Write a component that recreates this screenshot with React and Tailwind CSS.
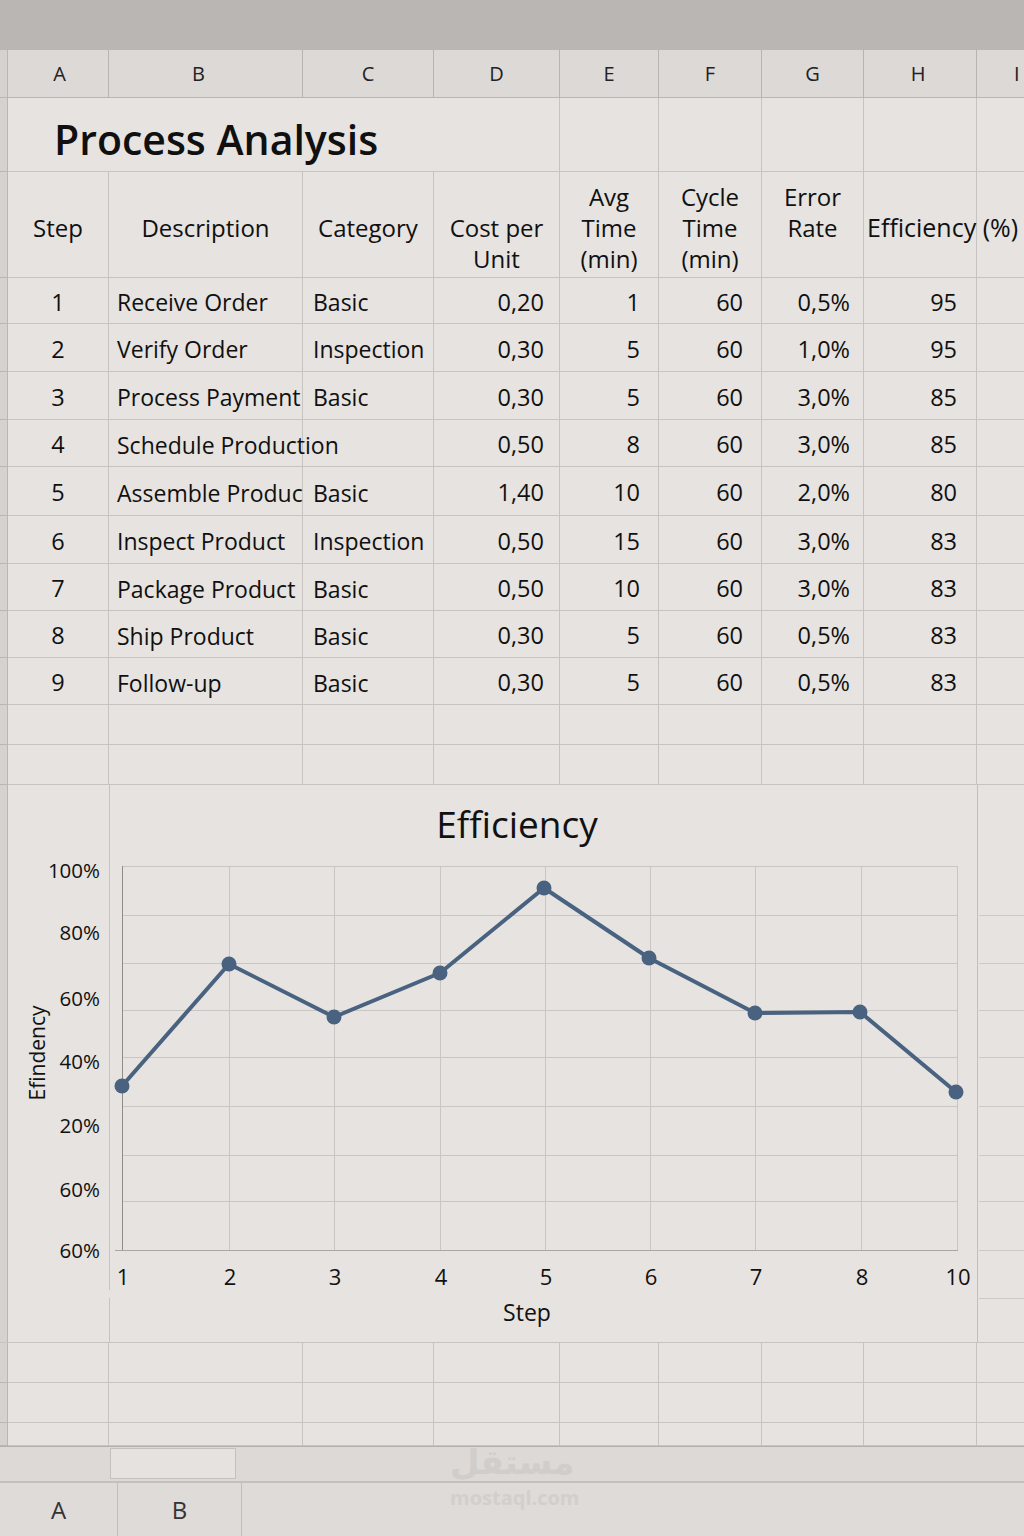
import React from 'react';

const cols = 'grid grid-cols-[8px_101px_194px_131px_126px_99px_103px_102px_113px_1fr]';
const line = 'border-[#c6c3c0]';

const letters = ['A', 'B', 'C', 'D', 'E', 'F', 'G', 'H', 'I'];
const letterPad = ['pl-[3px]', 'pr-[14px]', '', '', '', '', '', 'pr-[4px]', ''];

const heads = [
  ['', 'Step', ''],
  ['', 'Description', ''],
  ['', 'Category', ''],
  ['', 'Cost per', 'Unit'],
  ['Avg', 'Time', '(min)'],
  ['Cycle', 'Time', '(min)'],
  ['Error', 'Rate', ''],
];

const rows = [
  [1, 'Receive Order', 'Basic', '0,20', 1, 60, '0,5%', 95],
  [2, 'Verify Order', 'Inspection', '0,30', 5, 60, '1,0%', 95],
  [3, 'Process Payment', 'Basic', '0,30', 5, 60, '3,0%', 85],
  [4, 'Schedule Production', '', '0,50', 8, 60, '3,0%', 85],
  [5, 'Assemble Produc', 'Basic', '1,40', 10, 60, '2,0%', 80],
  [6, 'Inspect Product', 'Inspection', '0,50', 15, 60, '3,0%', 83],
  [7, 'Package Product', 'Basic', '0,50', 10, 60, '3,0%', 83],
  [8, 'Ship Product', 'Basic', '0,30', 5, 60, '0,5%', 83],
  [9, 'Follow-up', 'Basic', '0,30', 5, 60, '0,5%', 83],
];
const rowH = [46, 48, 48, 47, 49, 48, 47, 47, 47];

// chart geometry in page coordinates
const gx = [122, 229, 334, 440, 545, 650, 755, 861, 957];
const gy = [866, 915, 963, 1010, 1057, 1106, 1155, 1201, 1250];
const pts = [
  [122, 1086], [229, 964], [334, 1017], [440, 973], [544, 888],
  [649, 958], [755, 1013], [860, 1012], [956, 1092],
];
const yLabels = [
  ['100%', 871], ['80%', 933], ['60%', 999], ['40%', 1062],
  ['20%', 1126], ['60%', 1190], ['60%', 1251],
];
const xLabels = ['1', '2', '3', '4', '5', '6', '7', '8', '10'];

function Strip() {
  return <div className="bg-[#d5d2cf] border-r border-b border-[#b9b6b3]" />;
}

function BlankRow({ h }) {
  return (
    <div className={cols} style={{ height: h }}>
      <Strip />
      {letters.map((l, i) => (
        <div key={l} className={`border-b ${line} ${i < 8 ? 'border-r' : ''}`} />
      ))}
    </div>
  );
}

function Chart() {
  return (
    <svg width="1016" height="558" viewBox="8 785 1016 558" className="block">
      <line x1="109.5" y1="785" x2="109.5" y2="1290" stroke="#c6c3c0" />
      <line x1="109.5" y1="1298" x2="109.5" y2="1343" stroke="#c6c3c0" />
      <line x1="977.5" y1="785" x2="977.5" y2="1343" stroke="#c2bfbc" />
      {[915, 963, 1010, 1057, 1106, 1155, 1201, 1250, 1298].map(y => (
        <line key={y} x1="979" y1={y + 0.5} x2="1024" y2={y + 0.5} stroke="#ccc9c6" />
      ))}
      {gy.map(y => (
        <line key={y} x1="122" y1={y + 0.5} x2="957" y2={y + 0.5} stroke="#c8c5c2" />
      ))}
      {gx.slice(1).map(x => (
        <line key={x} x1={x + 0.5} y1="866" x2={x + 0.5} y2="1250" stroke="#c8c5c2" />
      ))}
      <line x1="122.5" y1="866" x2="122.5" y2="1250" stroke="#8e8b88" />
      <line x1="115" y1="1250.5" x2="958" y2="1250.5" stroke="#a9a6a3" />
      <polyline
        points={pts.map(p => p.join(',')).join(' ')}
        fill="none"
        stroke="#48627f"
        strokeWidth="4"
        strokeLinejoin="round"
      />
      {pts.map(([x, y]) => (
        <circle key={x} cx={x} cy={y} r="7.5" fill="#48627f" />
      ))}
      <g fontFamily="'Open Sans', sans-serif" fill="#111">
        <text x="517" y="838" fontSize="37" textAnchor="middle">Efficiency</text>
        {yLabels.map(([t, y], i) => (
          <text key={i} x="100" y={y + 7} fontSize="20.5" textAnchor="end">{t}</text>
        ))}
        {xLabels.map((t, i) => (
          <text key={i} x={gx[i] + 1} y="1285" fontSize="22" textAnchor="middle">{t}</text>
        ))}
        <text x="527" y="1321" fontSize="23" textAnchor="middle">Step</text>
        <text x="45" y="1053" fontSize="21" textAnchor="middle" transform="rotate(-90 45 1053)">Efindency</text>
      </g>
    </svg>
  );
}

export default function App() {
  return (
    <div className="w-[1024px] h-[1536px] overflow-hidden bg-[#e6e3e0] flex flex-col font-['Open_Sans',sans-serif] text-[#101010]">
      <div className="h-[50px] shrink-0 bg-[#b9b6b3]" />

      {/* column letters */}
      <div className={`${cols} h-[48px] bg-[#dcd9d6]`}>
        <Strip />
        {letters.map((l, i) => (
          <div
            key={l}
            className={`border-b border-[#b7b4b1] ${i < 8 ? 'border-r' : ''} flex items-center ${i === 8 ? 'pl-[37px]' : 'justify-center'} ${letterPad[i]} text-[20px] text-[#222]`}
          >
            {l}
          </div>
        ))}
      </div>

      {/* title */}
      <div className={`${cols} h-[74px]`}>
        <Strip />
        <div className={`col-span-4 border-r border-b ${line} flex items-center pl-[46px] pt-[10px] text-[41px] font-semibold`}>
          Process Analysis
        </div>
        {[0, 1, 2, 3].map(i => <div key={i} className={`border-r border-b ${line}`} />)}
        <div className={`border-b ${line}`} />
      </div>

      {/* table headings */}
      <div className={`${cols} h-[106px]`}>
        <Strip />
        {heads.map((h, i) => (
          <div key={i} className={`border-r border-b ${line} pt-[9px] flex flex-col items-center text-[24px] font-medium`}>
            {h.map((t, j) => (
              <div key={j} className="h-[31px] leading-[31px] whitespace-nowrap">{t}</div>
            ))}
          </div>
        ))}
        <div className={`border-r border-b ${line} pt-[40px] pl-[3px] text-[25px] font-medium whitespace-nowrap leading-[30px] relative z-10`}>
          Efficiency (%)
        </div>
        <div className={`border-b ${line}`} />
      </div>

      {/* data rows */}
      {rows.map((r, k) => (
        <div key={r[0]} className={cols} style={{ height: rowH[k] }}>
          <Strip />
          <div className={`border-r border-b ${line} flex items-center justify-center pt-[4px] text-[23.5px]`}>{r[0]}</div>
          <div className={`border-r border-b ${line} flex items-center pl-[8px] pt-[4px] text-[23px] whitespace-nowrap ${r[2] ? '' : 'relative z-10'}`}>
            {r[1]}
          </div>
          <div className={`border-r border-b ${line} flex items-center pl-[10px] pt-[4px] text-[23px]`}>{r[2]}</div>
          {r.slice(3).map((v, i) => (
            <div
              key={i}
              className={`border-r border-b ${line} flex items-center justify-end pt-[4px] text-[23.5px] ${['pr-[15px]', 'pr-[18px]', 'pr-[18px]', 'pr-[13px]', 'pr-[19px]'][i]}`}
            >
              {v}
            </div>
          ))}
          <div className={`border-b ${line}`} />
        </div>
      ))}

      <BlankRow h={40} />
      <BlankRow h={40} />

      {/* efficiency chart */}
      <div className="flex h-[558px] border-b border-[#c6c3c0]">
        <div className="w-[8px] bg-[#d5d2cf] border-r border-[#b9b6b3]" />
        <Chart />
      </div>

      <BlankRow h={40} />
      <BlankRow h={40} />
      <BlankRow h={23} />

      {/* sheet tab bar */}
      <div className="h-[37px] shrink-0 bg-[#dcd9d6] border-t border-[#b3b0ad] border-b-2 border-b-[#c3c0bd] flex items-start relative">
        <div className="ml-[110px] mt-[1px] w-[126px] h-[31px] bg-[#e5e2df] border border-[#c3c0bd]" />
        <span className="absolute left-[450px] top-[-2px] text-[34px] font-bold font-['DejaVu_Sans',sans-serif] text-[#d0cdca] leading-none">مستقل</span>
      </div>
      <div className="flex-1 bg-[#dedbd8] flex relative">
        <div className="w-[118px] border-r border-[#c0bdba] flex items-center justify-center text-[24px] text-[#333]">A</div>
        <div className="w-[124px] border-r border-[#c0bdba] flex items-center justify-center text-[24px] text-[#333]">B</div>
        <span className="absolute left-[450px] top-[0px] text-[20px] font-bold text-[#d2cfcc]">mostaql.com</span>
      </div>
    </div>
  );
}
